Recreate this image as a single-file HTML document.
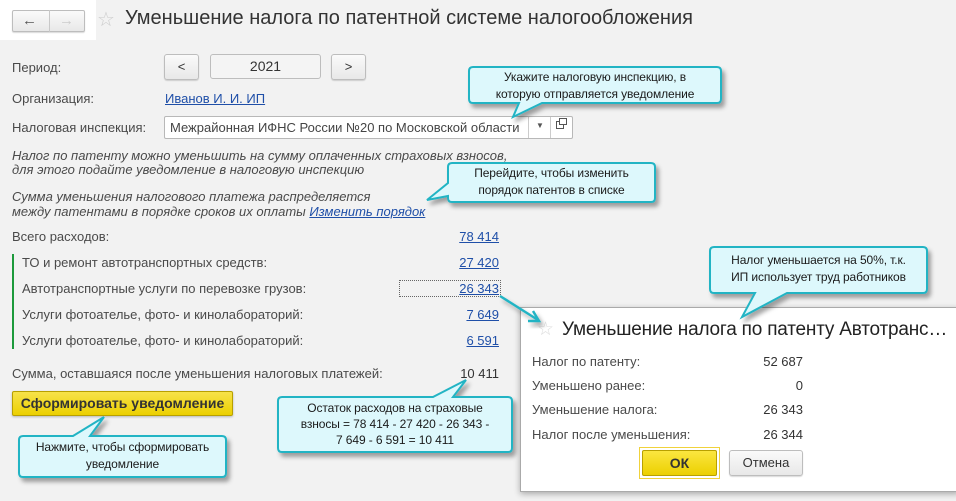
<!DOCTYPE html>
<html><head><meta charset="utf-8"><style>
*{margin:0;padding:0;box-sizing:border-box}
body{width:956px;height:501px;background:#f2f2f2;font-family:"Liberation Sans",Arial,sans-serif;font-size:13px;color:#4a4a4a;position:relative;overflow:hidden}
.a{position:absolute;white-space:nowrap}
.btn{position:absolute;border:1px solid #bdbdbd;border-radius:3px;background:linear-gradient(#fafafa,#e8e8e8);box-shadow:0 1px 1px rgba(0,0,0,.15);text-align:center;color:#333}
.lnk{color:#1f4fa8;text-decoration:underline}
.num{position:absolute;right:457px;text-align:right}
.it{font-style:italic;color:#4a4a4a}
.ct{position:absolute;text-align:center;color:#1a1a1a;font-size:12px;line-height:17px;letter-spacing:-0.1px}
</style></head><body>
<div class="a" style="left:0;top:0;width:96px;height:40px;background:#fff"></div>
<div class="btn" style="left:12px;top:10px;width:73px;height:22px;border-radius:2px"></div>
<div class="a" style="left:49px;top:10px;width:1px;height:22px;background:#c8c8c8"></div>
<div class="a" style="left:22px;top:12px;font-size:15px;color:#555;font-weight:bold">&#8592;</div>
<div class="a" style="left:59px;top:12px;font-size:15px;color:#ccc;font-weight:bold">&#8594;</div>
<div class="a" style="left:97px;top:7px;font-size:20px;color:#ccc">&#9734;</div>
<div class="a" style="left:125px;top:7px;font-size:20px;color:#333">Уменьшение налога по патентной системе налогообложения</div>

<div class="a" style="left:12px;top:60px">Период:</div>
<div class="btn" style="left:164px;top:54px;width:35px;height:26px;line-height:24px">&lt;</div>
<div class="btn" style="left:210px;top:54px;width:111px;height:25px;line-height:23px;font-size:14px;background:#f4f4f4;box-shadow:none">2021</div>
<div class="btn" style="left:331px;top:54px;width:35px;height:26px;line-height:24px">&gt;</div>
<div class="a" style="left:12px;top:91px">Организация:</div>
<div class="a lnk" style="left:165px;top:91px">Иванов И. И. ИП</div>
<div class="a" style="left:12px;top:120px">Налоговая инспекция:</div>
<div class="a" style="left:164px;top:116px;width:409px;height:23px;border:1px solid #b8b8b8;border-radius:2px;background:#fff"></div>
<div class="a" style="left:170px;top:120px;color:#444">Межрайонная ИФНС России №20 по Московской области</div>
<div class="a" style="left:528px;top:117px;width:1px;height:21px;background:#ccc"></div>
<div class="a" style="left:550px;top:117px;width:1px;height:21px;background:#ccc"></div>
<div class="a" style="left:536px;top:121px;font-size:8px;color:#555">&#9660;</div>
<div class="a" style="left:556px;top:121px;width:8px;height:8px;border:1px solid #555;background:#fff"></div>
<div class="a" style="left:559px;top:118px;width:8px;height:7px;border:1px solid #555;background:#fff"></div>
<div class="a it" style="left:12px;top:149px;line-height:14px">Налог по патенту можно уменьшить на сумму оплаченных страховых взносов,<br>для этого подайте уведомление в налоговую инспекцию</div>
<div class="a it" style="left:12px;top:189px;line-height:15px">Сумма уменьшения налогового платежа распределяется<br>между патентами в порядке сроков их оплаты <span class="lnk" style="color:#1f4fa8">Изменить порядок</span></div>

<div class="a" style="left:12px;top:229px">Всего расходов:</div><div class="num lnk" style="top:229px">78 414</div>
<div class="a" style="left:12px;top:254px;width:2px;height:95px;background:#1d9a3c"></div>
<div class="a" style="left:22px;top:255px">ТО и ремонт автотранспортных средств:</div><div class="num lnk" style="top:255px">27 420</div>
<div class="a" style="left:22px;top:281px">Автотранспортные услуги по перевозке грузов:</div>
<div class="a" style="left:399px;top:280px;width:102px;height:17px;border:1px dotted #666"></div>
<div class="num lnk" style="top:281px">26 343</div>
<div class="a" style="left:22px;top:307px">Услуги фотоателье, фото- и кинолабораторий:</div><div class="num lnk" style="top:307px">7 649</div>
<div class="a" style="left:22px;top:333px">Услуги фотоателье, фото- и кинолабораторий:</div><div class="num lnk" style="top:333px">6 591</div>
<div class="a" style="left:12px;top:366px">Сумма, оставшаяся после уменьшения налоговых платежей:</div><div class="num" style="top:366px;color:#333">10 411</div>
<div class="a" style="left:12px;top:391px;width:221px;height:25px;border:1px solid #b8a000;border-radius:2px;background:linear-gradient(#f7e24a,#ecd000);box-shadow:0 1px 2px rgba(0,0,0,.25);text-align:center;line-height:23px;font-size:14px;font-weight:bold;color:#333">Сформировать уведомление</div>

<!-- dialog -->
<div class="a" style="left:520px;top:307px;width:440px;height:185px;background:#fff;border:1px solid #aaa;box-shadow:0 2px 6px rgba(0,0,0,.3)"></div>
<div class="a" style="left:537px;top:318px;font-size:19px;color:#ddd">&#9734;</div>
<div class="a" style="left:562px;top:319px;font-size:19px;color:#222;letter-spacing:-0.2px">Уменьшение налога по патенту Автотранс…</div>
<div class="a" style="left:532px;top:354px">Налог по патенту:</div><div class="a" style="right:153px;top:354px;color:#333">52 687</div>
<div class="a" style="left:532px;top:378px">Уменьшено ранее:</div><div class="a" style="right:153px;top:378px;color:#333">0</div>
<div class="a" style="left:532px;top:402px">Уменьшение налога:</div><div class="a" style="right:153px;top:402px;color:#333">26 343</div>
<div class="a" style="left:532px;top:427px">Налог после уменьшения:</div><div class="a" style="right:153px;top:427px;color:#333">26 344</div>
<div class="a" style="left:639px;top:447px;width:81px;height:32px;border:1px solid #f0d23c"></div>
<div class="a" style="left:642px;top:450px;width:75px;height:26px;border:1px solid #b8a000;border-radius:2px;background:linear-gradient(#fbe640,#ecd000);text-align:center;line-height:24px;font-size:14px;font-weight:bold;color:#333">ОК</div>
<div class="btn" style="left:729px;top:450px;width:74px;height:26px;line-height:24px">Отмена</div>

<svg class="a" style="left:0;top:0" width="956" height="501">
<defs><filter id="s" x="-10%" y="-10%" width="130%" height="140%"><feDropShadow dx="3" dy="4" stdDeviation="2" flood-color="#000" flood-opacity=".35"/></filter></defs>
<g fill="#ddf8fc" stroke="#22b4c4" stroke-width="2" filter="url(#s)">
<path d="M473,67 H717 Q721,67 721,71 V99 Q721,103 717,103 H542 L513,117 L519,103 H473 Q469,103 469,99 V71 Q469,67 473,67Z"/>
<path d="M452,163 H651 Q655,163 655,167 V198 Q655,202 651,202 H452 Q448,202 448,198 V196 L427,200 L448,183 V167 Q448,163 452,163Z"/>
<path d="M714,247 H923 Q927,247 927,251 V289 Q927,293 923,293 H787 L742,317 L755,293 H714 Q710,293 710,289 V251 Q710,247 714,247Z"/>
<path d="M282,397 H433 L466,380 L453,397 H508 Q512,397 512,401 V448 Q512,452 508,452 H282 Q278,452 278,448 V401 Q278,397 282,397Z"/>
<path d="M23,436 H73 L104,417 L90,436 H222 Q226,436 226,440 V473 Q226,477 222,477 H23 Q19,477 19,473 V440 Q19,436 23,436Z"/>
</g>
<g stroke="#22b4c4" stroke-width="2.5" fill="none" filter="url(#s)"><path d="M500,296 L538,320"/><path d="M528,321 L539,321 L533,311"/></g>
</svg>
<div class="ct" style="left:469px;top:69px;width:252px">Укажите налоговую инспекцию, в<br>которую отправляется уведомление</div>
<div class="ct" style="left:448px;top:165px;width:207px">Перейдите, чтобы изменить<br>порядок патентов в списке</div>
<div class="ct" style="left:710px;top:252px;width:217px">Налог уменьшается на 50%, т.к.<br>ИП использует труд работников</div>
<div class="ct" style="left:278px;top:400px;width:234px;line-height:16px">Остаток расходов на страховые<br>взносы = 78 414 - 27 420 - 26 343 -<br>7 649 - 6 591 = 10 411</div>
<div class="ct" style="left:19px;top:439px;width:207px;line-height:17px">Нажмите, чтобы сформировать<br>уведомление</div>
</body></html>
